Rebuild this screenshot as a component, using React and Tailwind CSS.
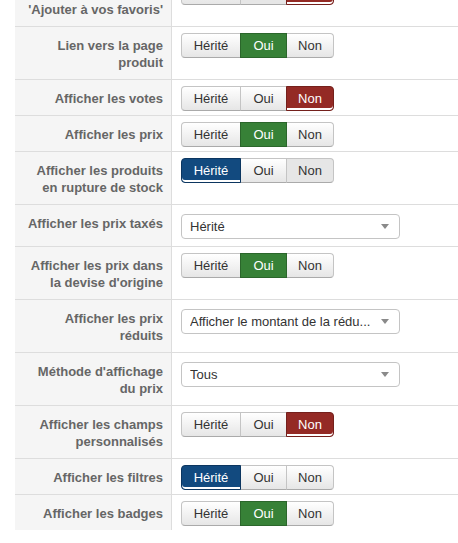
import React from 'react';

const rows = [
  { label: ['Afficher le bouton', "'Ajouter à vos favoris'"], type: 'btn', active: 'non', flat: 'oui' },
  { label: ['Lien vers la page', 'produit'], type: 'btn', active: 'oui' },
  { label: ['Afficher les votes'], type: 'btn', active: 'non' },
  { label: ['Afficher les prix'], type: 'btn', active: 'oui' },
  { label: ['Afficher les produits', 'en rupture de stock'], type: 'btn', active: 'herite', flat: 'non' },
  { label: ['Afficher les prix taxés'], type: 'select', value: 'Hérité' },
  { label: ['Afficher les prix dans', "la devise d'origine"], type: 'btn', active: 'oui' },
  { label: ['Afficher les prix', 'réduits'], type: 'select', value: 'Afficher le montant de la rédu...' },
  { label: ["Méthode d'affichage", 'du prix'], type: 'select', value: 'Tous' },
  { label: ['Afficher les champs', 'personnalisés'], type: 'btn', active: 'non' },
  { label: ['Afficher les filtres'], type: 'btn', active: 'herite' },
  { label: ['Afficher les badges'], type: 'btn', active: 'oui' },
];

const options = [
  { key: 'herite', text: 'Hérité', width: 'w-[60px]', round: 'rounded-l-[4px]' },
  { key: 'oui', text: 'Oui', width: 'w-[47px] -ml-px', round: '' },
  { key: 'non', text: 'Non', width: 'w-[48px] -ml-px', round: 'rounded-r-[4px]' },
];

const activeStyle = {
  herite: 'bg-[#124a7f] border-[#0c3660] text-white shadow-[inset_0_-2px_0_#ffffff] z-10',
  oui: 'bg-[#378137] border-[#2b662b] text-white z-10',
  non: 'bg-[#942a25] border-[#74201c] text-white shadow-[inset_0_-2px_0_#ffffff] z-10',
};

const ButtonGroup = ({ active, flat }) => (
  <div className="flex">
    {options.map(opt => {
      let style = 'bg-gradient-to-b from-white to-[#e6e6e6] border-[#c4c4c4] border-b-[#aaaaaa] text-[#333]';
      if (opt.key === active) style = activeStyle[opt.key];
      else if (opt.key === flat) style = 'bg-[#e6e6e6] border-[#c4c4c4] border-b-[#aaaaaa] text-[#333]';
      return (
        <div
          key={opt.key}
          className={`relative h-[25px] border flex items-center justify-center text-[13px] ${opt.width} ${opt.round} ${style}`}
        >
          {opt.text}
        </div>
      );
    })}
  </div>
);

const Select = ({ value }) => (
  <div className="w-[219px] h-[25px] border border-[#c4c4c4] rounded-[4px] bg-white flex items-center pl-[8px] pr-[10px] text-[13px] text-[#333]">
    <span className="flex-1 whitespace-nowrap overflow-hidden">{value}</span>
    <svg width="8" height="5" viewBox="0 0 8 5" className="ml-2">
      <path d="M0 0h8L4 5z" fill="#8a8a8a" />
    </svg>
  </div>
);

export default function App() {
  return (
    <div className="w-[458px] h-[543px] bg-white overflow-hidden pl-[15px]" style={{ fontFamily: '"Liberation Sans", Arial, sans-serif' }}>
      <div className="-mt-[26px]">
        {rows.map((row, i) => (
          <div key={i} className={`flex ${i > 0 ? 'border-t border-[#dddddd]' : ''}`}>
            <div className="w-[157px] shrink-0 bg-[#f5f5f5] border-r border-[#dddddd] text-right pr-[8px] pt-[10px] pb-[8px] text-[13px] leading-[17px] font-bold text-[#666]">
              {row.label.map((l, j) => (
                <div key={j}>{l}</div>
              ))}
            </div>
            <div className={`flex-1 pl-[9px] ${row.type === 'select' ? 'pt-[9px] pb-[7px]' : 'pt-[6px] pb-[4px]'}`}>
              {row.type === 'btn' ? <ButtonGroup active={row.active} flat={row.flat} /> : <Select value={row.value} />}
            </div>
          </div>
        ))}
      </div>
    </div>
  );
}
